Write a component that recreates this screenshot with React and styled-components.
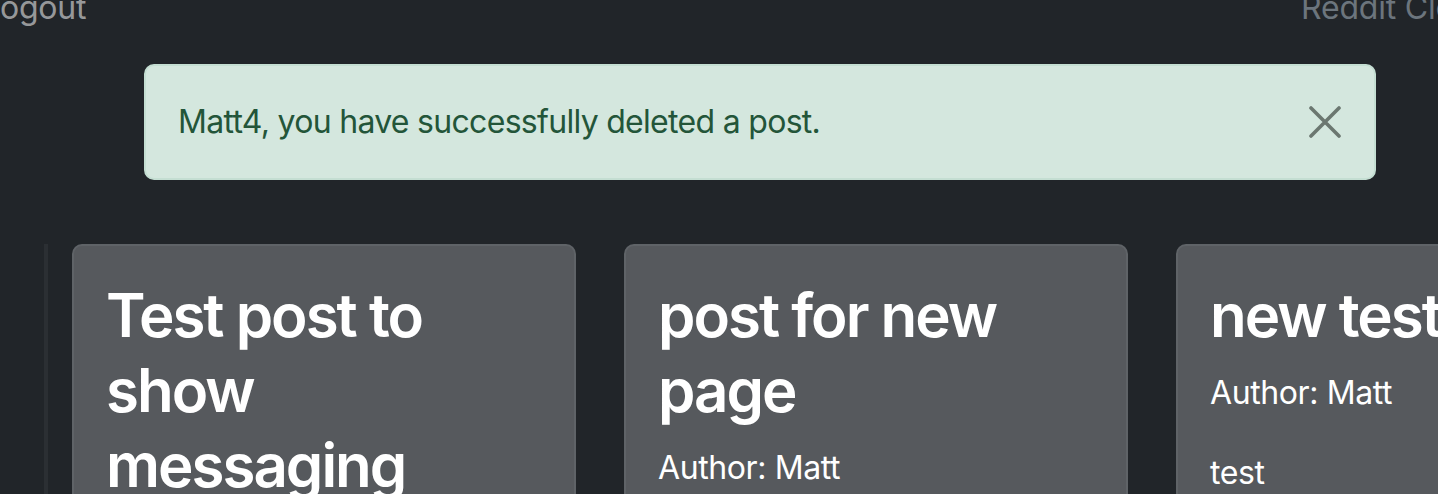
import styled, { createGlobalStyle } from 'styled-components';

const GlobalStyle = createGlobalStyle`
    html, body {
        margin: 0;
        padding: 0;
        background-color: #212529;
        overflow: hidden;
    }
    body {
        font-family: Inter, "Liberation Sans", sans-serif;
        color: #ffffff;
    }
`;

const posts = [
    { title: "Test post to show messaging", author: "Matt", body: "" },
    { title: "post for new page", author: "Matt", body: "" },
    { title: "new test", author: "Matt", body: "test" },
];

export default function App ()
{
    return (
      <>
        <GlobalStyle />
        <Page>
            <Nav>
                <NavLink>Logout</NavLink>
                <Brand>Reddit Clone</Brand>
            </Nav>

            <Alert>
                <AlertText>Matt4, you have successfully deleted a post.</AlertText>
                <CloseButton aria-label="Close">
                    <svg width="32" height="32" viewBox="0 0 32 32">
                        <path d="M2 2 L30 30 M30 2 L2 30" stroke="currentColor" strokeWidth="3.6" strokeLinecap="round" />
                    </svg>
                </CloseButton>
            </Alert>

            <Feed>
                {posts.map ((post, index) =>
                {
                    return <Card key={index}>
                        <CardTitle>{post.title}</CardTitle>
                        <Author>Author: {post.author}</Author>
                        {post.body ? <Body>{post.body}</Body> : <></>}
                    </Card>
                })}
            </Feed>
        </Page>
      </>
    );
}

const Page = styled.div `
    width: 100vw;
    height: 494px;
    overflow: hidden;
    background-color: #212529;
`;

const Nav = styled.nav `
    display: flex;
    align-items: center;
    margin: -16px -80px 0 -18px;
    height: 48px;
    font-size: 32px;
    line-height: 48px;
    letter-spacing: -0.2px;
`;

const NavLink = styled.a `
    color: rgba(255, 255, 255, 0.55);
`;

const Brand = styled.span `
    margin-left: auto;
    width: 217px;
    color: #6c757d;
`;

const Alert = styled.div `
    display: flex;
    align-items: center;
    margin: 32px 62px 0 144px;
    padding: 32px 32px;
    border: 2px solid #c4ded2;
    border-radius: 10px;
    background-color: #d4e7de;
    color: #235539;
`;

const AlertText = styled.p `
    flex: 1;
    margin: 0;
    font-size: 32px;
    line-height: 48px;
    letter-spacing: -0.7px;
`;

const CloseButton = styled.button `
    display: flex;
    width: 32px;
    height: 32px;
    padding: 0;
    margin-right: 1px;
    border: none;
    background: none;
    color: #6b7770;
`;

const Feed = styled.div `
    display: flex;
    gap: 48px;
    margin: 64px 0 0 44px;
    padding-left: 24px;
    border-left: 4px solid #2b2f33;
`;

const Card = styled.div `
    flex: 0 0 504px;
    box-sizing: border-box;
    min-height: 300px;
    padding: 32px;
    border: 2px solid #5f6367;
    border-radius: 10px;
    background-color: #56595d;
`;

const CardTitle = styled.h2 `
    margin: 0 0 16px;
    font-size: 60px;
    font-weight: 600;
    line-height: 75px;
    letter-spacing: -2px;
    color: #ffffff;
`;

const Author = styled.p `
    margin: 0 0 32px;
    font-size: 32px;
    line-height: 48px;
    letter-spacing: -0.4px;
`;

const Body = styled.p `
    margin: 0;
    font-size: 32px;
    line-height: 48px;
    letter-spacing: -0.4px;
`;
